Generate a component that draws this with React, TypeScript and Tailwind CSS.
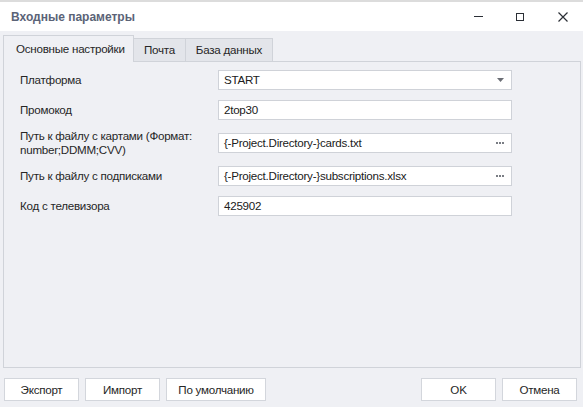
import React from "react";

const font = "font-['Liberation_Sans',_Arial,_sans-serif]";
const txt = "text-[11.6px] tracking-[-0.25px]";

function Field({ value, kind }: { value: string; kind?: "select" | "browse" }) {
  return (
    <div
      className={`w-[294px] h-[20px] shrink-0 bg-white border border-[#cfd2d8] flex items-center pl-[5px] pr-[6px] ${txt} text-[#202020] leading-none`}
    >
      <span className="flex-1 whitespace-nowrap">{value}</span>
      {kind === "select" && (
        <svg width="7" height="4" viewBox="0 0 7 4" className="mr-[1px]">
          <path d="M0 0h7L3.5 4z" fill="#6b6e75" />
        </svg>
      )}
      {kind === "browse" && (
        <div className="flex gap-[1px] mr-[1px]">
          <span className="w-[2px] h-[2px] bg-[#7a7d84]" />
          <span className="w-[2px] h-[2px] bg-[#7a7d84]" />
          <span className="w-[2px] h-[2px] bg-[#7a7d84]" />
        </div>
      )}
    </div>
  );
}

function Row({
  label,
  children,
  className,
}: {
  label: React.ReactNode;
  children: React.ReactNode;
  className?: string;
}) {
  return (
    <div className={`flex items-center ${className ?? ""}`}>
      <div className={`w-[214px] shrink-0 pl-[16px] ${txt} leading-[14px] text-[#262626] whitespace-nowrap`}>
        {label}
      </div>
      {children}
    </div>
  );
}

function Btn({ children, w }: { children: React.ReactNode; w: string }) {
  return (
    <div
      className={`${w} h-[23px] bg-white border border-[#d3d6dc] flex items-center justify-center ${txt} text-[#262626]`}
    >
      {children}
    </div>
  );
}

export default function App() {
  return (
    <div className={`w-[583px] h-[407px] bg-[#eff0f4] flex flex-col overflow-hidden ${font}`}>
      {/* title bar */}
      <div className="h-[31px] bg-white border-t-2 border-[#dcdcdc] flex items-center shrink-0">
        <span className="pl-[11px] text-[12px] font-bold text-[#5b6377]">Входные параметры</span>
        <div className="ml-auto flex items-center h-full">
          <div className="w-[42px] h-full flex items-center justify-center">
            <span className="w-[9px] h-[1px] bg-[#2b2f36]" />
          </div>
          <div className="w-[42px] h-full flex items-center justify-center">
            <span className="w-[8px] h-[8px] border border-[#2b2f36]" />
          </div>
          <div className="w-[42px] h-full flex items-center justify-center pl-[1px]">
            <svg width="10" height="10" viewBox="0 0 10 10">
              <path d="M0.5 0.5L9.5 9.5M9.5 0.5L0.5 9.5" stroke="#2b2f36" strokeWidth="1.2" />
            </svg>
          </div>
        </div>
      </div>

      {/* tabs */}
      <div className="flex items-end pl-[3px] pt-[4px] -mb-px relative z-10 shrink-0">
        <div
          className={`w-[131px] h-[27px] bg-[#eff0f4] border border-b-0 border-[#d0d3d9] flex items-center pl-[12px] ${txt} text-[#262626] whitespace-nowrap`}
        >
          Основные настройки
        </div>
        <div
          className={`w-[52px] h-[24px] bg-[#e3e5ea] border border-l-0 border-[#d0d3d9] flex items-center justify-center ${txt} text-[#262626]`}
        >
          Почта
        </div>
        <div
          className={`w-[87px] h-[24px] bg-[#e3e5ea] border border-l-0 border-[#d0d3d9] flex items-center justify-center ${txt} text-[#262626]`}
        >
          База данных
        </div>
      </div>

      {/* panel */}
      <div className="ml-[3px] w-[578px] h-[307px] border border-[#d0d3d9] flex flex-col shrink-0 pt-[8px]">
        <Row label="Платформа">
          <Field value="START" kind="select" />
        </Row>
        <Row label="Промокод" className="mt-[10px]">
          <Field value="2top30" />
        </Row>
        <Row
          label={
            <>
              Путь к файлу с картами (Формат:
              <br />
              number;DDMM;CVV)
            </>
          }
          className="mt-[9px]"
        >
          <Field value="{-Project.Directory-}cards.txt" kind="browse" />
        </Row>
        <Row label="Путь к файлу с подписками" className="mt-[9px]">
          <Field value="{-Project.Directory-}subscriptions.xlsx" kind="browse" />
        </Row>
        <Row label="Код с телевизора" className="mt-[10px]">
          <Field value="425902" />
        </Row>
      </div>

      {/* footer buttons */}
      <div className="flex items-center pl-[4px] pr-[6px] mt-[10px]">
        <div className="flex gap-[6px]">
          <Btn w="w-[75px]">Экспорт</Btn>
          <Btn w="w-[75px]">Импорт</Btn>
          <Btn w="w-[100px]">По умолчанию</Btn>
        </div>
        <div className="ml-auto flex gap-[6px]">
          <Btn w="w-[75px]">OK</Btn>
          <Btn w="w-[75px]">Отмена</Btn>
        </div>
      </div>
    </div>
  );
}
